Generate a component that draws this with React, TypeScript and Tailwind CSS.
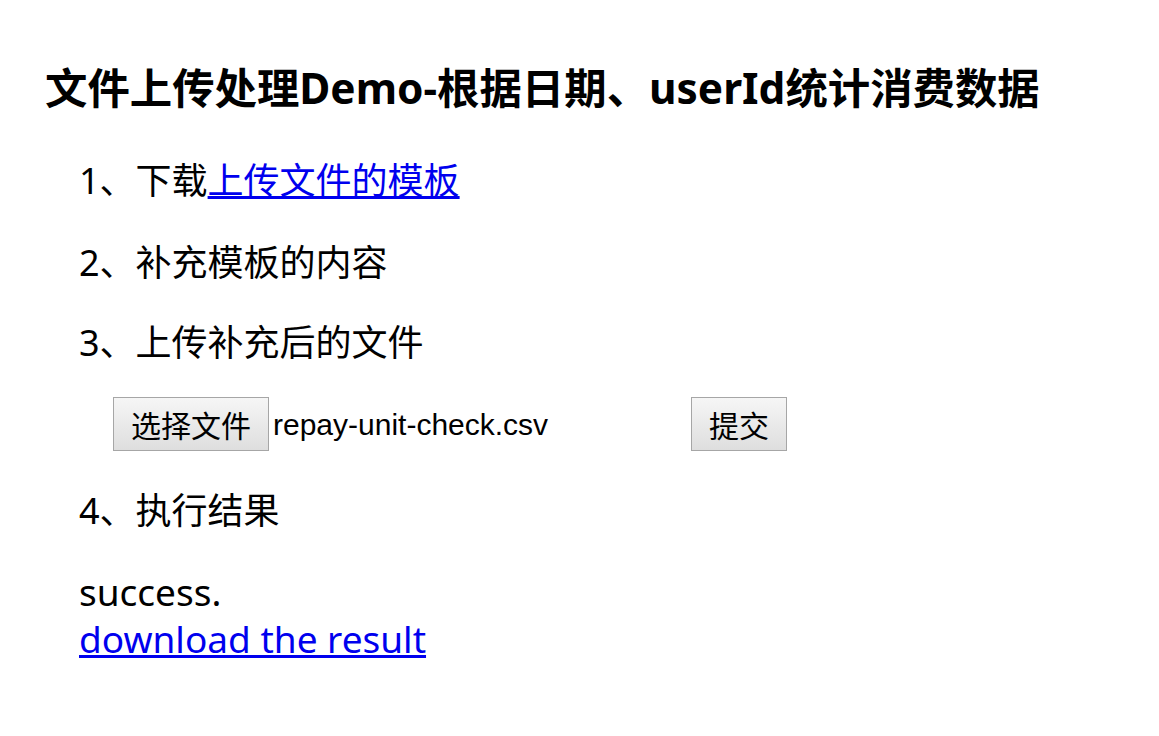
export default function App() {
  const font = { fontFamily: '"Noto Sans", "Noto Sans CJK SC", sans-serif' };
  return (
    <div className="min-h-screen bg-white text-black" style={font}>
      <div className="flex flex-col pl-[45px]">
        {/* Title */}
        <h2 className="mt-[60px] h-[56px] flex items-center text-[42.4px] font-bold whitespace-nowrap">
          文件上传处理Demo-根据日期、userId统计消费数据
        </h2>

        <div className="flex flex-col pl-[34px] text-[36px]">
          <div className="mt-[45px] h-10 flex items-center whitespace-nowrap">
            1、下载
            <a href="#" className="text-[#0000ee] underline">上传文件的模板</a>
          </div>
          <div className="mt-[42px] h-10 flex items-center">2、补充模板的内容</div>
          <div className="mt-[40px] h-10 flex items-center">3、上传补充后的文件</div>

          {/* File form */}
          <form className="mt-[34px] h-[54px] flex items-center pl-[34px]" onSubmit={(e) => e.preventDefault()}>
            <button
              type="button"
              className="h-[54px] px-[17px] border border-[#a6a6a6] bg-gradient-to-b from-[#f6f6f6] to-[#dedede] text-[30px] leading-none"
              style={{ fontFamily: '"Noto Sans CJK SC", sans-serif' }}
            >
              选择文件
            </button>
            <span
              className="ml-[4px] w-[418px] text-[30px] whitespace-nowrap"
              style={{ fontFamily: '"Liberation Sans", Arial, sans-serif' }}
            >
              repay-unit-check.csv
            </span>
            <button
              type="submit"
              className="h-[54px] px-[17px] border border-[#a6a6a6] bg-gradient-to-b from-[#f6f6f6] to-[#dedede] text-[30px] leading-none"
              style={{ fontFamily: '"Noto Sans CJK SC", sans-serif' }}
            >
              提交
            </button>
          </form>

          <div className="mt-[40px] h-10 flex items-center">4、执行结果</div>

          <div className="mt-[37px] flex flex-col text-[37px] leading-[47px]">
            <span>success.</span>
            <a href="#" className="text-[#0000ee] underline self-start">download the result</a>
          </div>
        </div>
      </div>
    </div>
  );
}
